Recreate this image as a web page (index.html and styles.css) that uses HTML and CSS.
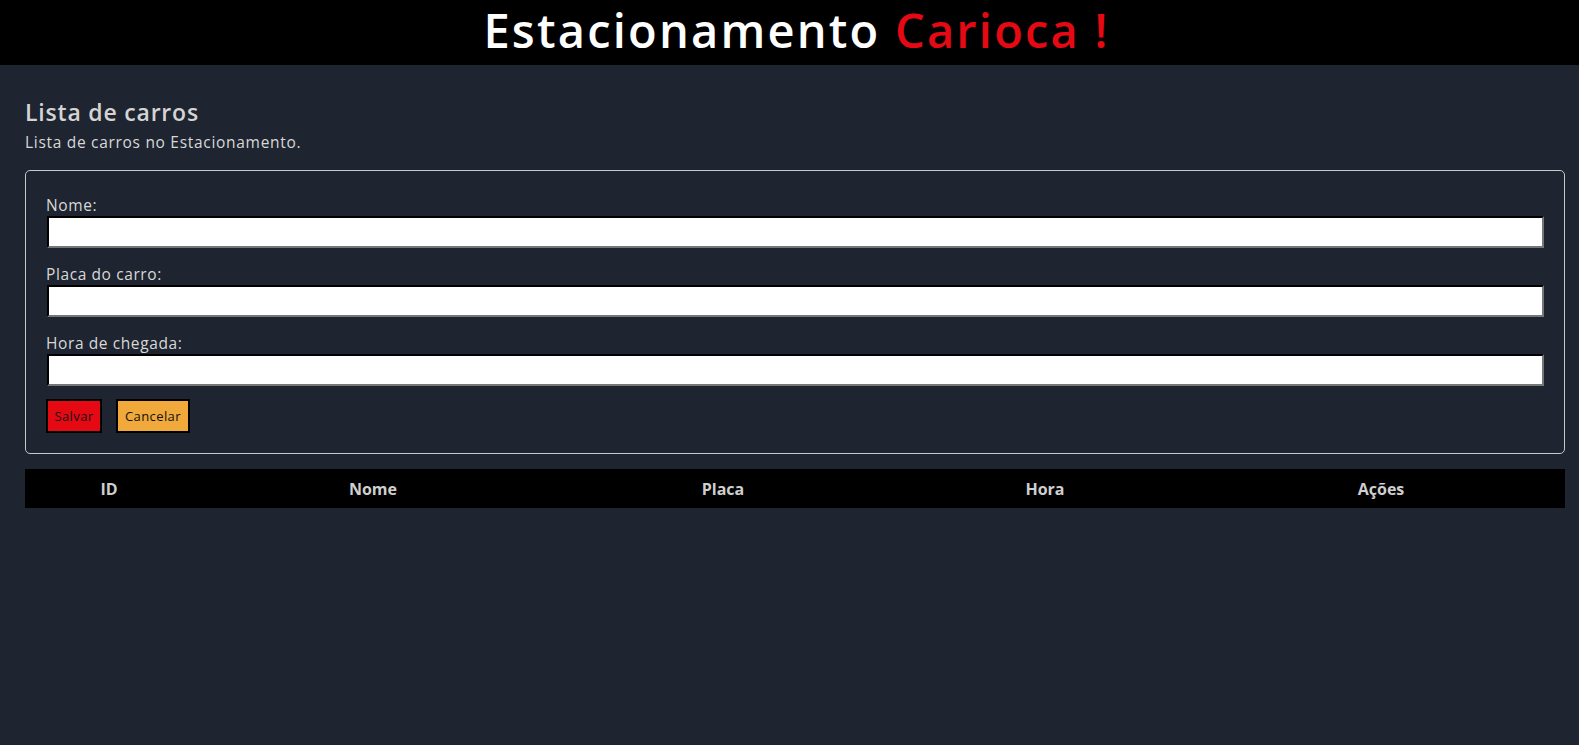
FILE: index.html
```html
<!DOCTYPE html>
<html lang="pt-BR">
<head>
<meta charset="utf-8">
<title>Estacionamento Carioca</title>
<link rel="stylesheet" href="styles.css">
</head>
<body>
<header class="topbar">
  <h1 class="brand">Estacionamento <span class="brand-red">Carioca !</span></h1>
</header>
<main class="content">
  <h2 class="page-title">Lista de carros</h2>
  <p class="page-sub">Lista de carros no Estacionamento.</p>
  <form class="car-form">
    <label class="field-label" for="nome">Nome:</label>
    <input class="field-input" id="nome" type="text">
    <label class="field-label" for="placa">Placa do carro:</label>
    <input class="field-input" id="placa" type="text">
    <label class="field-label" for="hora">Hora de chegada:</label>
    <input class="field-input" id="hora" type="text">
    <div class="actions">
      <button type="button" class="btn btn-save">Salvar</button>
      <button type="button" class="btn btn-cancel">Cancelar</button>
    </div>
  </form>
  <table class="cars">
    <thead>
      <tr>
        <th class="col-id">ID</th>
        <th class="col-nome">Nome</th>
        <th class="col-placa">Placa</th>
        <th class="col-hora">Hora</th>
        <th class="col-acoes">Ações</th>
      </tr>
    </thead>
    <tbody></tbody>
  </table>
</main>
</body>
</html>
```
FILE: styles.css
```css
html, body {
  margin: 0;
  padding: 0;
  background: #1e2430;
  font-family: "Open Sans", "DejaVu Sans", sans-serif;
  color: #d6d6d6;
}

.topbar {
  background: #000;
  height: 65px;
  display: flex;
  align-items: center;
  justify-content: center;
}

.brand {
  margin: 0 0 0 14px;
  font-size: 47px;
  font-weight: 600;
  color: #fff;
  letter-spacing: 2.2px;
  line-height: 1;
  padding-bottom: 4px;
}

.brand-red {
  color: #e50914;
}

.content {
  padding: 30px 14px 0 25px;
}

.page-title {
  margin: 0;
  font-size: 23px;
  font-weight: 600;
  color: #d4d4d4;
  letter-spacing: 0.8px;
  line-height: 34px;
}

.page-sub {
  margin: 2px 0 17px 0;
  font-size: 15.5px;
  letter-spacing: 0.7px;
  line-height: 22px;
  color: #d8d8d8;
}

.car-form {
  border: 1px solid #c8c8c8;
  border-radius: 5px;
  padding: 24px 20px 20px 20px;
  display: flex;
  flex-direction: column;
}

.field-label {
  font-size: 15.5px;
  letter-spacing: 0.6px;
  line-height: 20px;
  color: #d8d8d8;
  margin-bottom: 1px;
}

.field-input {
  height: 32px;
  box-sizing: border-box;
  background: #fff;
  border: 2px inset #767676;
  border-top-color: #1a1a1a;
  border-left-color: #1a1a1a;
  margin: 0 0 16px 1px;
  padding: 0 4px;
}

.actions {
  display: flex;
  gap: 14px;
  margin-top: -3px;
}

.btn {
  font-family: inherit;
  font-size: 13px;
  letter-spacing: 0.4px;
  height: 34px;
  border: 2px solid #000;
  padding: 0 3px;
  color: #111;
  border-radius: 0;
}

.btn-save {
  background: #e50914;
  width: 56px;
}

.btn-cancel {
  background: #f0a93a;
  width: 74px;
}

.cars {
  margin-top: 15px;
  width: 100%;
  border-collapse: collapse;
  table-layout: fixed;
}

.cars th {
  background: #000;
  color: #cfcfcf;
  font-weight: 700;
  font-size: 16px;
  height: 39px;
  padding: 0;
  text-align: center;
}

.col-id { width: 168px; }
.col-nome { width: 360px; }
.col-placa { width: 340px; }
.col-hora { width: 304px; }
.col-acoes { width: 368px; }
```
